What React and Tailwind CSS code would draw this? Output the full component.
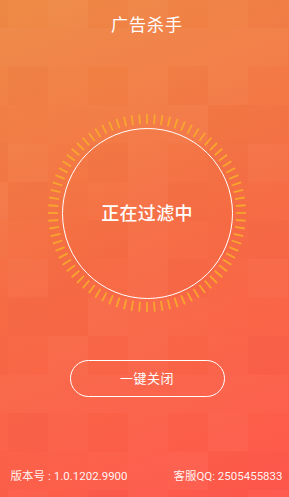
import React from 'react';

const TICKS = Array.from({ length: 80 }, (_, i) => (i * 360) / 80);

// faint mosaic behind everything
const CELLS = [];
for (let r = 0; r < 14; r++) {
  for (let c = 0; c < 8; c++) {
    const v = ((r * 7 + c * 13 + r * c * 5) % 9) - 4;
    CELLS.push({ x: 8 + c * 40 - 40, y: 28 + r * 38.5 - 38.5, v });
  }
}

function Mosaic() {
  return (
    <svg className="absolute inset-0 w-full h-full" viewBox="0 0 289 497" preserveAspectRatio="none">
      {CELLS.map((cell, i) => (
        <rect
          key={i}
          x={cell.x}
          y={cell.y}
          width="40"
          height="38.5"
          fill={cell.v > 0 ? '#ffffff' : '#b0301a'}
          fillOpacity={Math.abs(cell.v) * 0.008}
        />
      ))}
    </svg>
  );
}

function Dial() {
  return (
    <div className="relative w-[200px] h-[200px] flex items-center justify-center">
      <svg className="absolute inset-0" width="200" height="200" viewBox="0 0 200 200">
        {TICKS.map((a) => (
          <line
            key={a}
            x1="100"
            y1="1"
            x2="100"
            y2="11"
            stroke="#f8ab2c"
            strokeWidth="1.8"
            strokeOpacity="0.9"
            transform={`rotate(${a} 100 100)`}
          />
        ))}
      </svg>
      <div className="relative w-[171px] h-[171px] rounded-full border-[1.5px] border-white flex items-center justify-center">
        <span className="text-[18px] font-medium text-white tracking-[0.3px]">正在过滤中</span>
      </div>
    </div>
  );
}

export default function App() {
  return (
    <div
      className="relative w-[289px] h-[497px] overflow-hidden bg-linear-160 from-[#ee8b46] via-[#f66c45] to-[#ff574c] text-white"
      style={{ fontFamily: 'Roboto, "Noto Sans CJK SC", sans-serif' }}
    >
      <Mosaic />
      <div className="relative h-full flex flex-col items-center pl-[5px]">
        <h1 className="pt-[13px] text-[17px] leading-6 font-normal tracking-[1px]">广告杀手</h1>
        <div className="mt-[76px]">
          <Dial />
        </div>
        <button className="mt-[47px] w-[155px] h-[37px] rounded-full border border-white text-[13px] tracking-[0.5px] flex items-center justify-center">
          一键关闭
        </button>
        <div className="mt-auto w-full -ml-[5px] pl-[8px] pr-[4px] pb-[13px] flex justify-between text-[11.5px] leading-4 text-white/95">
          <span>
            版本号<span className="px-[3px]">:</span>1.0.1202.9900
          </span>
          <span>客服QQ: 2505455833</span>
        </div>
      </div>
    </div>
  );
}
